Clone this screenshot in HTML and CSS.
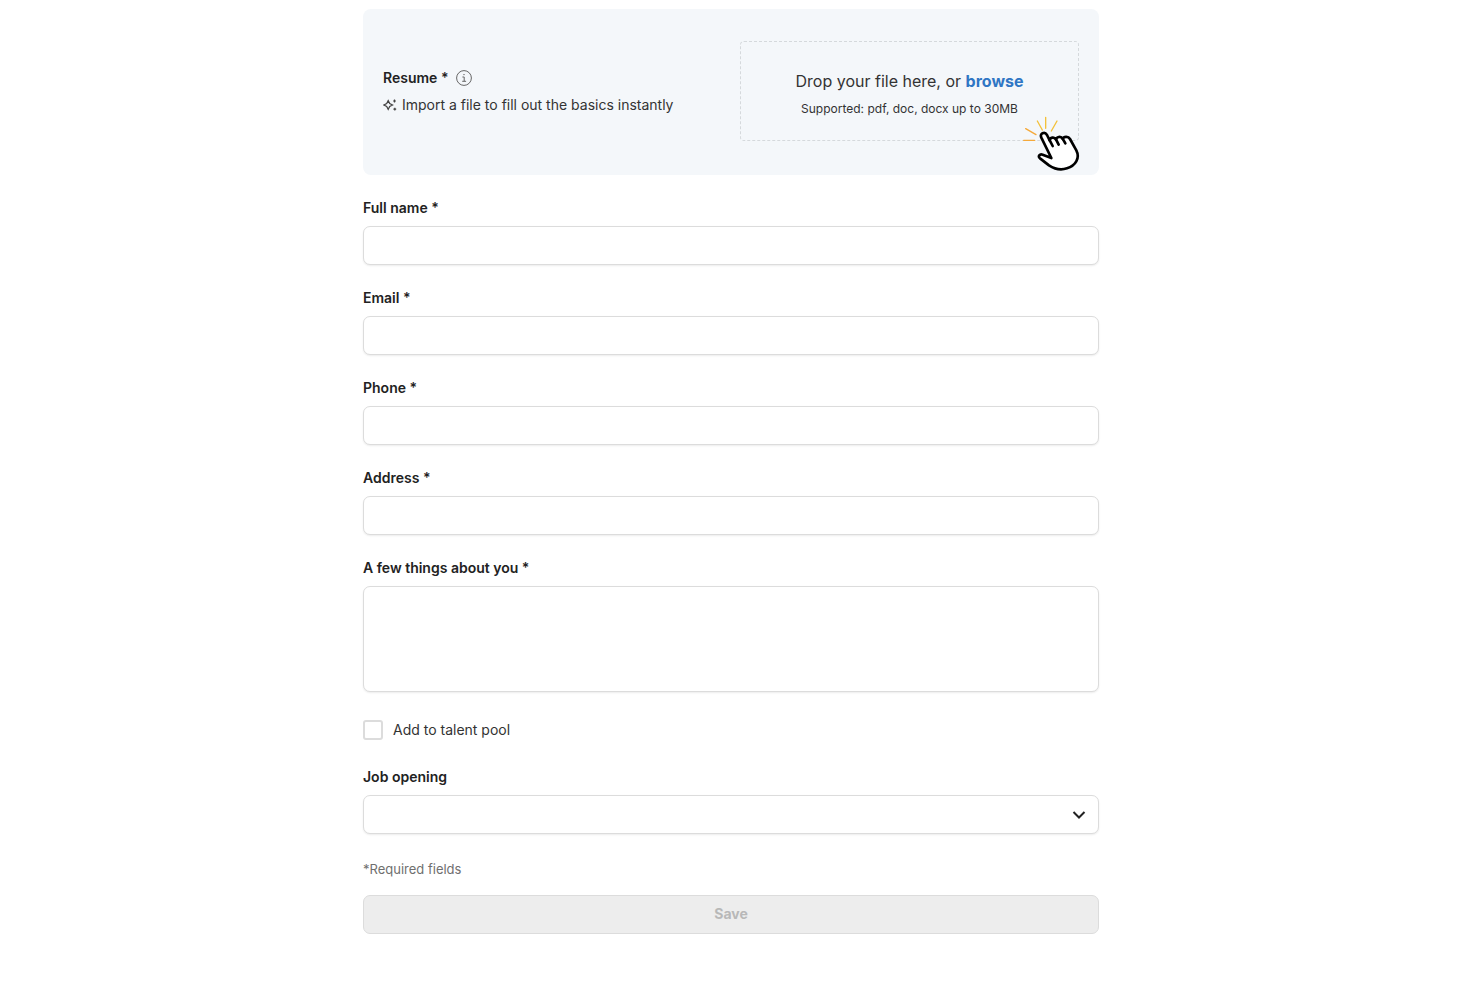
FILE: index.html
```html
<!DOCTYPE html>
<html lang="en">
  <head>
    <meta charset="UTF-8" />
    <meta name="viewport" content="width=device-width, initial-scale=1.0" />
    <title>Add candidate</title>
    <link rel="stylesheet" href="styles.css">
  </head>
  <body>
    <form class="candidate-form">
      <section class="resume">
        <div class="resume-info">
          <div class="resume-title">
            <span class="label">Resume *</span>
            <svg class="info-icon" viewBox="0 0 16 16" fill="none" stroke="#666" role="img" aria-label="Info">
              <circle cx="8" cy="8" r="7.4" />
              <path d="M6.4 7h1.8v4.2M6.2 11.3h3.9" />
              <circle cx="8" cy="4.7" r=".4" fill="#666" stroke-width=".6" />
            </svg>
          </div>
          <p class="resume-hint">
            <svg class="sparkle-icon" viewBox="0 0 15 14" fill="none" stroke="#444" stroke-width="1.2" aria-hidden="true">
              <path d="M5.2 2.6 6.7 5.5 9.6 7 6.7 8.5 5.2 11.4 3.7 8.5.8 7l2.9-1.5z" />
              <path d="M11.5 1.6v2.8M10.1 3h2.8M11.8 9.8v2.8M10.4 11.2h2.8" />
            </svg>
            Import a file to fill out the basics instantly
          </p>
        </div>
        <div class="dropzone">
          <p class="drop-text">Drop your file here, or <a href="#">browse</a></p>
          <p class="drop-note">Supported: pdf, doc, docx up to 30MB</p>
          <svg class="pointer" viewBox="33 27 180 174" fill="none" stroke-linecap="round" stroke-linejoin="round" aria-hidden="true">
            <path stroke="#f3c13a" stroke-width="4" d="M107 37v33M82 48l15 27M141 48l-17 30" />
            <path stroke="#f5a93a" stroke-width="4" d="M47 71l31 18M41 106h33" />
            <path fill="#fff" stroke="#000" stroke-width="8" d="M124 159 94 98c-6-13 10-20 17-8l8 16c1-9 14-12 19-2 1-9 15-12 20-2 3-8 17-9 22 0l19 34c12 24-3 46-28 54-21 7-42-1-54-9l-27-21c-7-6-1-14 8-11z" />
            <path stroke="#000" stroke-width="8" d="m118 104 10 19M138 103l8 16M158 101l8 14" />
          </svg>
        </div>
      </section>

      <div class="field">
        <label class="label" for="name">Full name *</label>
        <input class="control" type="text" id="name" />
      </div>
      <div class="field">
        <label class="label" for="email">Email *</label>
        <input class="control" type="email" id="email" />
      </div>
      <div class="field">
        <label class="label" for="phone">Phone *</label>
        <input class="control" type="tel" id="phone" />
      </div>
      <div class="field">
        <label class="label" for="address">Address *</label>
        <input class="control" type="text" id="address" />
      </div>
      <div class="field">
        <label class="label" for="about">A few things about you *</label>
        <textarea class="control about" id="about"></textarea>
      </div>

      <div class="talent">
        <input type="checkbox" id="talent" />
        <label for="talent">Add to talent pool</label>
      </div>

      <div class="field">
        <label class="label" for="job">Job opening</label>
        <div class="select">
          <select class="control" id="job">
            <option value=""></option>
          </select>
          <svg class="chevron" viewBox="0 0 14 10" fill="none" stroke="#222" stroke-width="2" aria-hidden="true">
            <path d="m1.5 2 5.5 5.5L12.5 2" />
          </svg>
        </div>
      </div>

      <p class="required">*Required fields</p>
      <button class="save" type="submit" disabled>Save</button>
    </form>
  </body>
</html>
```
FILE: styles.css
```css
* {
  box-sizing: border-box;
}

body {
  margin: 0;
  padding: 9px 18px 48px 0;
  background: #fff;
  color: #333;
  font-family: Inter, "Liberation Sans", sans-serif;
  font-size: 14px;
  line-height: 18px;
}

p {
  margin: 0;
}

.candidate-form {
  max-width: 736px;
  margin: 0 auto;
}

.label {
  color: #222;
  font-weight: 600;
}

/* Resume upload */
.resume {
  display: grid;
  grid-template-columns: 1fr 1fr;
  gap: 18px;
  align-items: center;
  padding: 32px 20px 34px;
  margin-bottom: 24px;
  background: #f4f7fa;
  border-radius: 8px;
}

.resume-info {
  display: flex;
  flex-direction: column;
  gap: 9px;
}

.resume-title {
  display: flex;
  align-items: center;
  gap: 8px;
}

.info-icon {
  width: 16px;
  height: 16px;
}

.resume-hint {
  display: flex;
  align-items: center;
  gap: 4px;
}

.sparkle-icon {
  width: 15px;
  height: 14px;
}

.dropzone {
  position: relative;
  display: flex;
  flex-direction: column;
  align-items: center;
  justify-content: center;
  gap: 8px;
  min-height: 100px;
  padding: 6px 16px 0;
  border: 1px dashed #d5d9dc;
  border-radius: 4px;
}

.drop-text {
  font-size: 16px;
  line-height: 22px;
}

.drop-text a {
  color: #2f76c4;
  font-weight: 700;
  text-decoration: none;
}

.drop-note {
  font-size: 12px;
}

.pointer {
  position: absolute;
  right: -3px;
  bottom: -32px;
  width: 60px;
  height: 58px;
}

/* Fields */
.field {
  display: flex;
  flex-direction: column;
  gap: 9px;
  margin-bottom: 24px;
}

.control {
  display: block;
  width: 100%;
  height: 39px;
  margin: 0;
  padding: 0 12px;
  background: #fff;
  border: 1px solid #dcdcdc;
  border-radius: 7px;
  box-shadow: 0 1px 2px rgba(0, 0, 0, 0.08);
  color: #333;
  font: inherit;
}

.about {
  height: 106px;
  padding: 10px 12px;
  resize: none;
}

.talent {
  display: flex;
  align-items: center;
  gap: 10px;
  margin: 28px 0;
}

.talent input {
  appearance: none;
  width: 20px;
  height: 20px;
  margin: 0;
  background: #fff;
  border: 2px solid #dcdcdc;
  border-radius: 3px;
}

.talent input:checked {
  background: #2f76c4;
}

.select {
  position: relative;
}

.select .control {
  appearance: none;
}

.chevron {
  position: absolute;
  top: 15px;
  right: 13px;
  width: 14px;
  height: 10px;
  pointer-events: none;
}

.required {
  margin: 26px 0 17px;
  color: #6f6f6f;
  font-size: 13px;
}

.save {
  width: 100%;
  height: 39px;
  padding: 0 0 2px;
  background: #ededed;
  border: 1px solid #dcdcdc;
  border-radius: 7px;
  color: #b8b8b8;
  font: inherit;
  font-weight: 700;
}
```
